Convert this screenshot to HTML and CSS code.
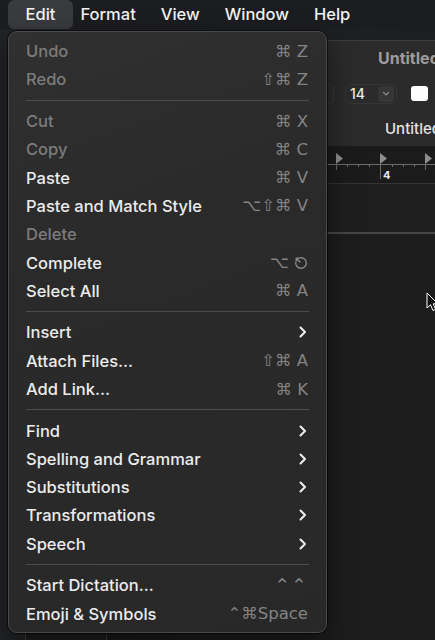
FILE: index.html
```html
<!DOCTYPE html>
<html lang="en">
<head>
    <meta charset="UTF-8">
    <meta name="viewport" content="width=device-width, initial-scale=1.0">
    <title>Edit menu</title>
    <link rel="stylesheet" href="styles.css">
</head>
<body>
    <div class="screen">
        <div class="menubar">
            <span class="menubar-item active">Edit</span>
            <span class="menubar-item">Format</span>
            <span class="menubar-item">View</span>
            <span class="menubar-item">Window</span>
            <span class="menubar-item">Help</span>
        </div>

        <!-- document window behind the menu -->
        <div class="window">
            <div class="titlebar">Untitled</div>
            <div class="toolbar">
                <div class="field"></div>
                <div class="size-field">
                    <span>14</span>
                    <span class="size-arrow">
                        <svg width="8" height="6" viewBox="0 0 8 6"><path d="M1.5 1.5 L4 4 L6.5 1.5" fill="none" stroke="#8a8a8a" stroke-width="1.2" stroke-linecap="round"/></svg>
                    </span>
                </div>
                <div class="color-well"></div>
            </div>
            <div class="tabbar">Untitled</div>
            <div class="ruler">
                <svg width="410" height="38" viewBox="0 0 410 38">
                    <g stroke="#6c6c6c" stroke-width="1">
                        <line x1="0" y1="18.5" x2="410" y2="18.5"/>
                        <line x1="310.5" y1="18" x2="310.5" y2="24"/>
                        <line x1="321.5" y1="18" x2="321.5" y2="21"/>
                        <line x1="332.5" y1="18" x2="332.5" y2="21"/>
                        <line x1="343.5" y1="18" x2="343.5" y2="21"/>
                        <line x1="354.5" y1="18" x2="354.5" y2="33"/>
                        <line x1="366.5" y1="18" x2="366.5" y2="21"/>
                        <line x1="377.5" y1="18" x2="377.5" y2="21"/>
                        <line x1="388.5" y1="18" x2="388.5" y2="21"/>
                        <line x1="399.5" y1="18" x2="399.5" y2="24"/>
                    </g>
                    <g fill="#8e8e8e">
                        <path d="M310 7 L317 12.5 L310 18 Z"/>
                        <path d="M354 7 L361 12.5 L354 18 Z"/>
                        <path d="M399 7 L406 12.5 L399 18 Z"/>
                    </g>
                    <text x="357" y="33" class="ruler-num">4</text>
                </svg>
            </div>
            <div class="paragraph-area"></div>
            <div class="window-body">
                <div class="sidebar"></div>
                <div class="page"></div>
            </div>
        </div>

        <div class="menu">
            <div class="menu-item disabled"><span>Undo</span><span class="keys">⌘ Z</span></div>
            <div class="menu-item disabled"><span>Redo</span><span class="keys">⇧⌘ Z</span></div>
            <div class="separator"></div>
            <div class="menu-item disabled"><span>Cut</span><span class="keys">⌘ X</span></div>
            <div class="menu-item disabled"><span>Copy</span><span class="keys">⌘ C</span></div>
            <div class="menu-item"><span>Paste</span><span class="keys">⌘ V</span></div>
            <div class="menu-item"><span>Paste and Match Style</span><span class="keys">⌥⇧⌘ V</span></div>
            <div class="menu-item disabled"><span>Delete</span></div>
            <div class="menu-item"><span>Complete</span>
                <span class="keys">⌥<svg class="esc" width="14" height="14" viewBox="0 0 14 14"><path d="M6 1.8 A5.3 5.3 0 1 1 1.8 6" fill="none" stroke="#888" stroke-width="1.4"/><path d="M2.2 2.2 L6 6 M2.2 2.2 H5.2 M2.2 2.2 V5.2" fill="none" stroke="#888" stroke-width="1.4" stroke-linecap="round"/></svg></span>
            </div>
            <div class="menu-item"><span>Select All</span><span class="keys">⌘ A</span></div>
            <div class="separator"></div>
            <div class="menu-item"><span>Insert</span><svg class="chevron" width="8" height="12" viewBox="0 0 8 12"><path d="M1.5 1.5 L6 6 L1.5 10.5" fill="none" stroke="#f0f0f0" stroke-width="2" stroke-linecap="round" stroke-linejoin="round"/></svg></div>
            <div class="menu-item"><span>Attach Files...</span><span class="keys">⇧⌘ A</span></div>
            <div class="menu-item"><span>Add Link...</span><span class="keys">⌘ K</span></div>
            <div class="separator"></div>
            <div class="menu-item"><span>Find</span><svg class="chevron" width="8" height="12" viewBox="0 0 8 12"><path d="M1.5 1.5 L6 6 L1.5 10.5" fill="none" stroke="#f0f0f0" stroke-width="2" stroke-linecap="round" stroke-linejoin="round"/></svg></div>
            <div class="menu-item"><span>Spelling and Grammar</span><svg class="chevron" width="8" height="12" viewBox="0 0 8 12"><path d="M1.5 1.5 L6 6 L1.5 10.5" fill="none" stroke="#f0f0f0" stroke-width="2" stroke-linecap="round" stroke-linejoin="round"/></svg></div>
            <div class="menu-item"><span>Substitutions</span><svg class="chevron" width="8" height="12" viewBox="0 0 8 12"><path d="M1.5 1.5 L6 6 L1.5 10.5" fill="none" stroke="#f0f0f0" stroke-width="2" stroke-linecap="round" stroke-linejoin="round"/></svg></div>
            <div class="menu-item"><span>Transformations</span><svg class="chevron" width="8" height="12" viewBox="0 0 8 12"><path d="M1.5 1.5 L6 6 L1.5 10.5" fill="none" stroke="#f0f0f0" stroke-width="2" stroke-linecap="round" stroke-linejoin="round"/></svg></div>
            <div class="menu-item"><span>Speech</span><svg class="chevron" width="8" height="12" viewBox="0 0 8 12"><path d="M1.5 1.5 L6 6 L1.5 10.5" fill="none" stroke="#f0f0f0" stroke-width="2" stroke-linecap="round" stroke-linejoin="round"/></svg></div>
            <div class="separator"></div>
            <div class="menu-item"><span>Start Dictation...</span><span class="keys carets">⌃⌃</span></div>
            <div class="menu-item"><span>Emoji &amp; Symbols</span><span class="keys">⌃⌘Space</span></div>
        </div>

        <svg class="cursor" width="13" height="20" viewBox="0 0 13 20">
            <path d="M1 1 L1 16 L4.5 12.7 L7 18.5 L9.6 17.4 L7.2 11.8 L11.8 11.8 Z" fill="#111" stroke="#fff" stroke-width="1"/>
        </svg>
    </div>
</body>
</html>
```

FILE: styles.css
```css
* {
    box-sizing: border-box;
    margin: 0;
    padding: 0;
}
body {
    background: #1e1f22;
    font-family: Inter, 'Noto Sans', 'DejaVu Sans', sans-serif;
    overflow: hidden;
}
.screen {
    position: relative;
    width: 435px;
    height: 640px;
    overflow: hidden;
    background: linear-gradient(90deg, #222326 0%, #1d1e21 100%);
}

/* top menu bar */
.menubar {
    display: flex;
    height: 29px;
    padding-left: 8px;
    align-items: center;
    background: #1c1d20;
}
.menubar-item {
    padding: 0 12.5px;
    height: 29px;
    line-height: 29px;
    font-size: 16.5px;
    font-weight: 500;
    color: #f4f4f4;
}
.menubar-item.active {
    padding: 0 17.5px;
    margin-right: -5px;
    background: #3a3b3f;
    border-radius: 6px;
}

/* window behind */
.window {
    position: absolute;
    left: 25px;
    top: 40px;
    width: 440px;
    height: 620px;
    background: #1d1d1d;
    border: 1px solid #3c3c3c;
    border-radius: 10px;
    overflow: hidden;
}
.titlebar {
    height: 35px;
    line-height: 35px;
    padding-left: 352px;
    background: #2b2b2b;
    color: #9d9d9d;
    font-size: 16px;
    font-weight: 700;
    white-space: nowrap;
}
.toolbar {
    display: flex;
    align-items: center;
    height: 35px;
    padding-left: 239px;
    background: #2b2b2b;
}
.field {
    width: 69px;
    height: 20px;
    border: 1px solid #393939;
    border-radius: 5px;
}
.size-field {
    display: flex;
    align-items: center;
    justify-content: space-between;
    width: 52px;
    height: 20px;
    margin-left: 11px;
    padding: 0 2px 0 4px;
    border: 1px solid #363636;
    border-radius: 5px;
    color: #eaeaea;
    font-size: 14px;
    font-weight: 500;
}
.size-arrow {
    display: flex;
    align-items: center;
    justify-content: center;
    width: 16px;
    height: 16px;
    background: #363636;
    border-radius: 3px;
}
.color-well {
    width: 17px;
    height: 15px;
    margin-left: 14px;
    background: #fdfdfd;
    border-radius: 3px;
}
.tabbar {
    height: 35px;
    line-height: 35px;
    padding-left: 359px;
    background: #2b2b2b;
    color: #e4e4e4;
    font-size: 15px;
    font-weight: 500;
    white-space: nowrap;
}
.ruler {
    height: 38px;
    background: #1b1b1b;
    border-bottom: 1px solid #333;
}
.ruler svg {
    display: block;
}
.ruler-num {
    fill: #e8e8e8;
    font-size: 11px;
    font-weight: 700;
    font-family: Inter, sans-serif;
}
.paragraph-area {
    height: 50px;
    background: #1e1e1e;
    border-bottom: 2px solid #474747;
}
.window-body {
    display: flex;
    height: 500px;
}
.sidebar {
    width: 81px;
    background: #1e1e1e;
    border-right: 1px solid #3a3a3a;
}
.page {
    flex: 1;
    background: linear-gradient(90deg, #191919 0%, #1d1d1d 30%, #1d1d1d 100%);
}

/* dropdown menu */
.menu {
    position: absolute;
    left: 8px;
    top: 31px;
    width: 319px;
    height: 602px;
    padding: 5px 0;
    background: linear-gradient(160deg, #303030 0%, #2a2a2a 35%, #282828 100%);
    border: 1px solid #4a4a4a;
    border-radius: 9px;
    box-shadow: 0 0 0 1px rgba(0,0,0,0.6), 0 10px 30px rgba(0,0,0,0.5);
}
.menu-item {
    display: flex;
    align-items: center;
    justify-content: space-between;
    height: 28.3px;
    padding: 0 18px 0 17px;
    font-size: 16.5px;
    font-weight: 500;
    color: #ececec;
}
.menu-item.disabled {
    color: #7c7c7c;
}
.keys {
    display: flex;
    align-items: center;
    gap: 2px;
    color: #848484;
    font-family: 'DejaVu Sans', sans-serif;
    font-size: 16.5px;
    white-space: pre;
}
.carets {
    font-size: 19px;
    letter-spacing: 1px;
}
.esc {
    margin-left: 3px;
}
.chevron {
    margin-right: 1px;
}
.separator {
    height: 13.3px;
    margin: 0 17px;
    display: flex;
    align-items: center;
}
.separator::after {
    content: "";
    display: block;
    width: 100%;
    height: 1px;
    background: #4c4c4c;
}

.cursor {
    position: absolute;
    left: 426px;
    top: 292px;
}
```
